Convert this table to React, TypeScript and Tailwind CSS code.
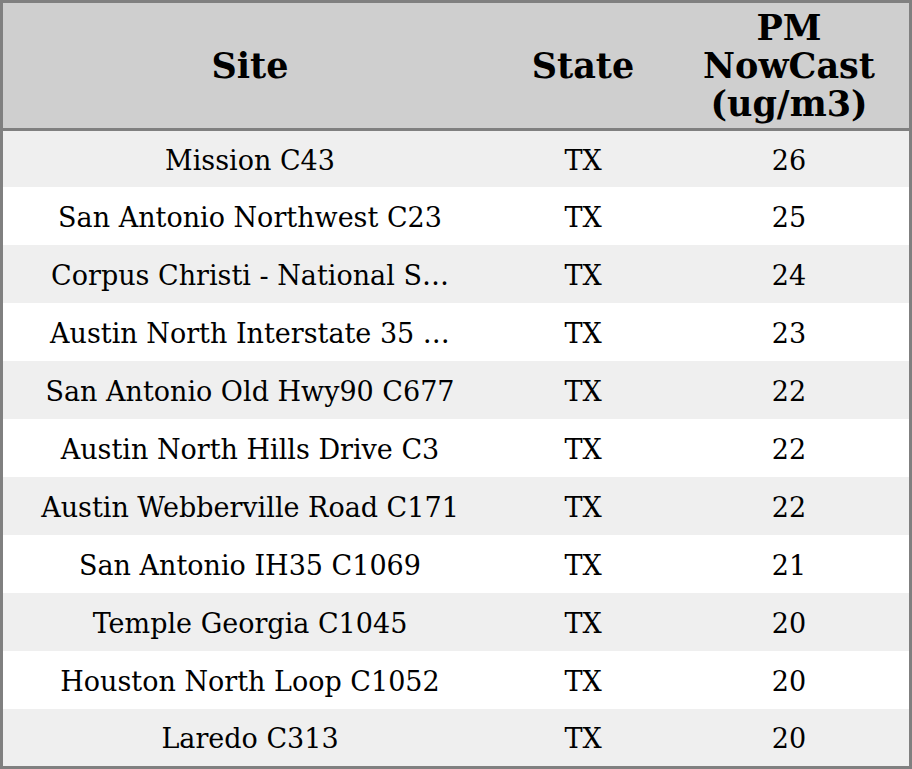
const rows: [string, string, number][] = [
  ['Mission C43', 'TX', 26],
  ['San Antonio Northwest C23', 'TX', 25],
  ['Corpus Christi - National S…', 'TX', 24],
  ['Austin North Interstate 35 …', 'TX', 23],
  ['San Antonio Old Hwy90 C677', 'TX', 22],
  ['Austin North Hills Drive C3', 'TX', 22],
  ['Austin Webberville Road C171', 'TX', 22],
  ['San Antonio IH35 C1069', 'TX', 21],
  ['Temple Georgia C1045', 'TX', 20],
  ['Houston North Loop C1052', 'TX', 20],
  ['Laredo C313', 'TX', 20],
];

export default function App() {
  return (
    <div className="w-[912px] h-[769px] bg-white font-['DejaVu_Serif',serif] text-black">
      <div className="border-[3px] border-[#808080] flex flex-col">
        <div className="grid grid-cols-[494px_172px_240px] h-[128px] bg-[#cfcfcf] border-b-[3px] border-[#808080] text-[35px] leading-[38px] font-bold">
          <div className="flex items-center justify-center">Site</div>
          <div className="flex items-center justify-center">State</div>
          <div className="flex items-center justify-center text-center">
            PM
            <br />
            NowCast
            <br />
            (ug/m3)
          </div>
        </div>
        {rows.map(([site, state, value], idx) => (
          <div
            key={site}
            className={`grid grid-cols-[494px_172px_240px] pt-[4px] text-[27px] ${
              idx === 0 ? 'h-[56px]' : idx === rows.length - 1 ? 'h-[57px]' : 'h-[58px]'
            } ${idx % 2 === 0 ? 'bg-[#efefef]' : 'bg-white'}`}
          >
            <div className="flex items-center justify-center whitespace-nowrap">{site}</div>
            <div className="flex items-center justify-center">{state}</div>
            <div className="flex items-center justify-center">{value}</div>
          </div>
        ))}
      </div>
    </div>
  );
}
